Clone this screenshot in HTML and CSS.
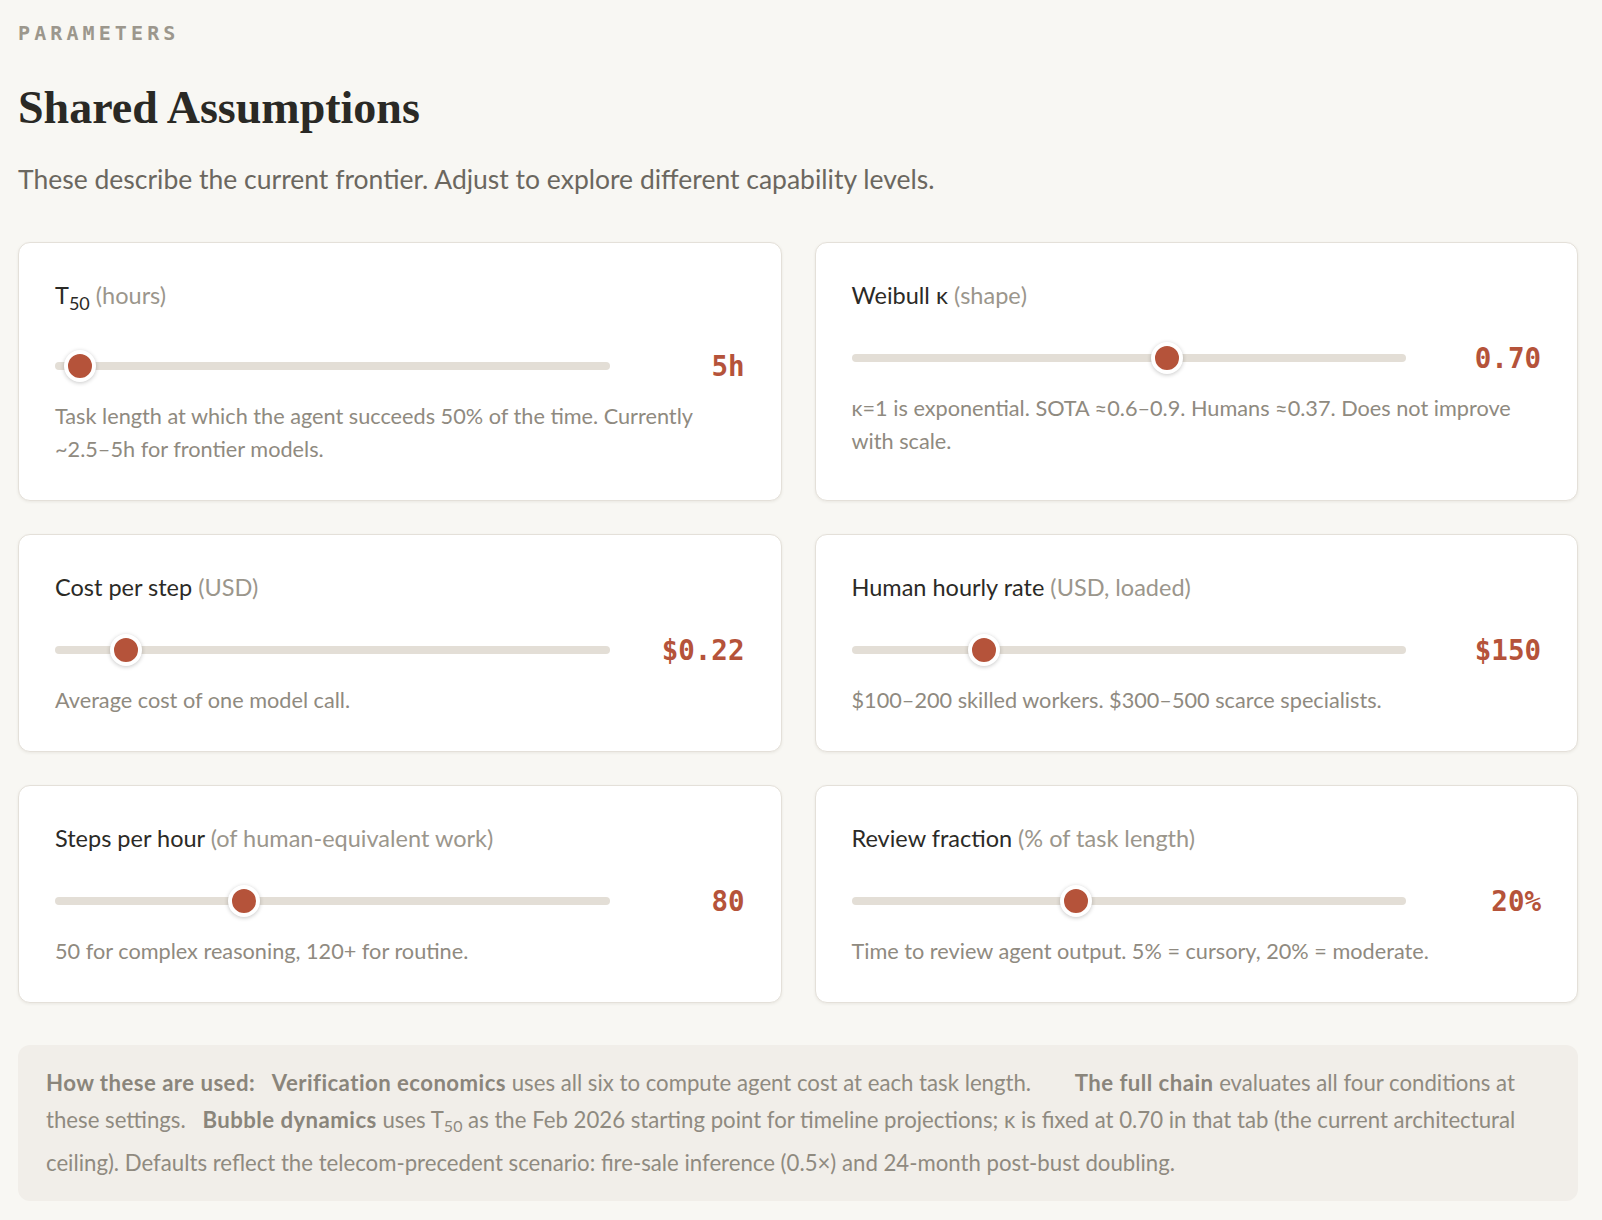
FILE: index.html
```html
<!DOCTYPE html>
<html lang="en">
<head>
<meta charset="utf-8">
<title>Shared Assumptions</title>
<link rel="stylesheet" href="styles.css">
</head>
<body>
<main class="page">
  <div class="eyebrow">PARAMETERS</div>
  <h1 class="title">Shared Assumptions</h1>
  <p class="lede">These describe the current frontier. Adjust to explore different capability levels.</p>

  <section class="grid">
    <div class="card">
      <div class="label">T<sub>50</sub> <span class="unit">(hours)</span></div>
      <div class="control">
        <input class="slider" type="range" min="0" max="1000" value="18" aria-label="T50 hours">
        <span class="value">5h</span>
      </div>
      <p class="desc">Task length at which the agent succeeds 50% of the time. Currently ~2.5–5h for frontier models.</p>
    </div>

    <div class="card">
      <div class="label">Weibull κ <span class="unit">(shape)</span></div>
      <div class="control">
        <input class="slider" type="range" min="0" max="1000" value="573" aria-label="Weibull kappa">
        <span class="value">0.70</span>
      </div>
      <p class="desc">κ=1 is exponential. SOTA ≈0.6–0.9. Humans ≈0.37. Does not improve with scale.</p>
    </div>

    <div class="card">
      <div class="label">Cost per step <span class="unit">(USD)</span></div>
      <div class="control">
        <input class="slider" type="range" min="0" max="1000" value="105" aria-label="Cost per step">
        <span class="value">$0.22</span>
      </div>
      <p class="desc">Average cost of one model call.</p>
    </div>

    <div class="card">
      <div class="label">Human hourly rate <span class="unit">(USD, loaded)</span></div>
      <div class="control">
        <input class="slider" type="range" min="0" max="1000" value="223" aria-label="Human hourly rate">
        <span class="value">$150</span>
      </div>
      <p class="desc">$100–200 skilled workers. $300–500 scarce specialists.</p>
    </div>

    <div class="card">
      <div class="label">Steps per hour <span class="unit">(of human-equivalent work)</span></div>
      <div class="control">
        <input class="slider" type="range" min="0" max="1000" value="332" aria-label="Steps per hour">
        <span class="value">80</span>
      </div>
      <p class="desc">50 for complex reasoning, 120+ for routine.</p>
    </div>

    <div class="card">
      <div class="label">Review fraction <span class="unit">(% of task length)</span></div>
      <div class="control">
        <input class="slider" type="range" min="0" max="1000" value="399" aria-label="Review fraction">
        <span class="value">20%</span>
      </div>
      <p class="desc">Time to review agent output. 5% = cursory, 20% = moderate.</p>
    </div>
  </section>

  <div class="info">
    <strong>How these are used:</strong> <strong class="lead">Verification economics</strong> uses all six to compute agent cost at each task length. <strong class="lead wide">The full chain</strong> evaluates all four conditions at these settings. <strong class="lead">Bubble dynamics</strong> uses T<sub>50</sub> as the Feb 2026 starting point for timeline projections; κ is fixed at 0.70 in that tab (the current architectural ceiling). Defaults reflect the telecom-precedent scenario: fire-sale inference (0.5×) and 24-month post-bust doubling.
  </div>
</main>
</body>
</html>
```

FILE: styles.css
```css
* {
  box-sizing: border-box;
}

html, body {
  margin: 0;
  padding: 0;
  background: #f8f7f3;
}

body {
  font-family: "Lato", "Noto Sans", sans-serif;
  color: #2b2a26;
}

.page {
  width: 1560px;
  margin-left: 18px;
  padding-top: 20px;
  padding-bottom: 22px;
}

.eyebrow {
  font-family: "DejaVu Sans Mono", monospace;
  font-size: 20px;
  font-weight: 700;
  letter-spacing: 4.1px;
  color: #9c978d;
  line-height: 26px;
}

.title {
  font-family: "Liberation Serif", serif;
  font-weight: 700;
  font-size: 46px;
  line-height: 56px;
  color: #2a2925;
  margin: 34px 0 0;
}

.lede {
  font-size: 26.5px;
  line-height: 34px;
  color: #6b675f;
  margin: 26px 0 0;
}

.grid {
  display: grid;
  grid-template-columns: 1fr 1fr;
  gap: 33px 33px;
  margin-top: 46px;
}

.card {
  background: #ffffff;
  border: 1px solid #e4e0d9;
  border-radius: 12px;
  box-shadow: 0 1px 3px rgba(60, 50, 30, 0.08);
  padding: 36px 36px 34px;
}

.label {
  font-size: 23.5px;
  line-height: 33px;
  color: #2b2a26;
}

.label sub {
  font-size: 18px;
}

.unit {
  color: #9b968c;
}

.control {
  display: grid;
  grid-template-columns: 1fr 135px;
  align-items: center;
  height: 36px;
  margin-top: 28px;
}

.value {
  font-family: "DejaVu Sans Mono", monospace;
  font-size: 27.5px;
  font-weight: 700;
  color: #b5533a;
  text-align: right;
  line-height: 36px;
}

.slider {
  -webkit-appearance: none;
  appearance: none;
  width: 100%;
  height: 32px;
  margin: 0;
  background: transparent;
}

.slider::-webkit-slider-runnable-track {
  height: 8px;
  background: #e3ded6;
  border-radius: 4px;
}

.slider::-webkit-slider-thumb {
  -webkit-appearance: none;
  appearance: none;
  width: 32px;
  height: 32px;
  margin-top: -12px;
  border-radius: 50%;
  background: #b5533a;
  border: 4px solid #ffffff;
  box-shadow: 0 1px 4px rgba(0, 0, 0, 0.22);
}

.desc {
  font-size: 21.7px;
  line-height: 33px;
  color: #8f8a80;
  margin: 16px 0 0;
}

.info {
  margin-top: 42px;
  background: #f1eee9;
  border-radius: 12px;
  padding: 19px 28px 20px;
  font-size: 22.2px;
  line-height: 37px;
  color: #8f8a80;
}

.info strong {
  font-weight: 700;
  color: #8a857b;
  letter-spacing: 0.45px;
}

.info .lead {
  margin-left: 11px;
}

.info .wide {
  margin-left: 38px;
}

.info sub {
  font-size: 16px;
  vertical-align: -4px;
}
```
